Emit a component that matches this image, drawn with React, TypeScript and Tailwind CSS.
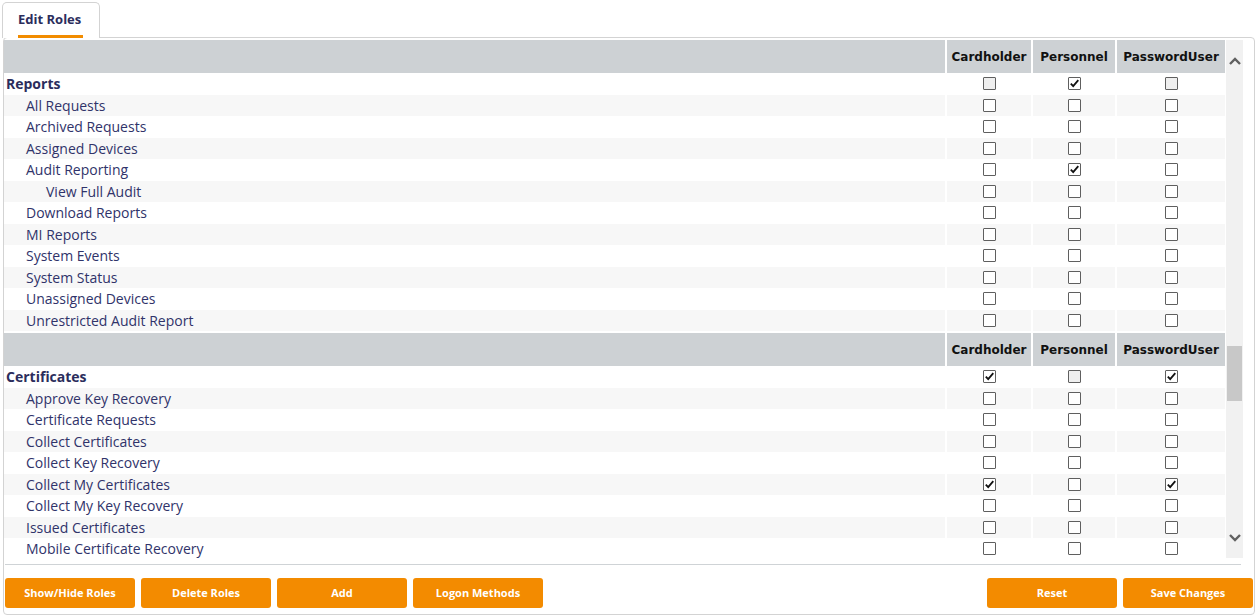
import React from 'react';

type Row = { label: string; level: 0 | 1 | 2; checks: [boolean, boolean, boolean] };

const reports: Row[] = [
  { label: 'Reports', level: 0, checks: [false, true, false] },
  { label: 'All Requests', level: 1, checks: [false, false, false] },
  { label: 'Archived Requests', level: 1, checks: [false, false, false] },
  { label: 'Assigned Devices', level: 1, checks: [false, false, false] },
  { label: 'Audit Reporting', level: 1, checks: [false, true, false] },
  { label: 'View Full Audit', level: 2, checks: [false, false, false] },
  { label: 'Download Reports', level: 1, checks: [false, false, false] },
  { label: 'MI Reports', level: 1, checks: [false, false, false] },
  { label: 'System Events', level: 1, checks: [false, false, false] },
  { label: 'System Status', level: 1, checks: [false, false, false] },
  { label: 'Unassigned Devices', level: 1, checks: [false, false, false] },
  { label: 'Unrestricted Audit Report', level: 1, checks: [false, false, false] },
];

const certificates: Row[] = [
  { label: 'Certificates', level: 0, checks: [true, false, true] },
  { label: 'Approve Key Recovery', level: 1, checks: [false, false, false] },
  { label: 'Certificate Requests', level: 1, checks: [false, false, false] },
  { label: 'Collect Certificates', level: 1, checks: [false, false, false] },
  { label: 'Collect Key Recovery', level: 1, checks: [false, false, false] },
  { label: 'Collect My Certificates', level: 1, checks: [true, false, true] },
  { label: 'Collect My Key Recovery', level: 1, checks: [false, false, false] },
  { label: 'Issued Certificates', level: 1, checks: [false, false, false] },
  { label: 'Mobile Certificate Recovery', level: 1, checks: [false, false, false] },
];

const roles = ['Cardholder', 'Personnel', 'PasswordUser'];

const Checkbox: React.FC<{ checked: boolean; section: boolean }> = ({ checked, section }) => (
  <div
    className={`w-[13px] h-[13px] border border-[#5f5f5f] rounded-[1px] flex items-center justify-center ${
      section && !checked ? 'bg-[#efefef]' : 'bg-white'
    }`}
  >
    {checked && (
      <svg width="11" height="11" viewBox="0 0 11 11">
        <path d="M1.8 5.6 L4.2 8.2 L9.3 2.2" fill="none" stroke="#111" strokeWidth="1.8" />
      </svg>
    )}
  </div>
);

const Section: React.FC<{ rows: Row[] }> = ({ rows }) => (
  <div className="grid grid-cols-[941px_84px_82px_108px] gap-x-[2px]">
    <div className="h-[33px] bg-[#cdd1d4]" />
    {roles.map((r) => (
      <div
        key={r}
        className="h-[33px] bg-[#cdd1d4] flex items-center justify-center text-[12px] font-bold text-[#111] font-['DejaVu_Sans',sans-serif]"
      >
        {r}
      </div>
    ))}
    {rows.map((row, i) => {
      const bg = i % 2 === 1 ? 'bg-[#f7f7f7]' : 'bg-white';
      const pad =
        row.level === 0
          ? 'pl-[2px] font-bold text-[#2b2d5c]'
          : row.level === 1
          ? 'pl-[22px] text-[#30336a]'
          : 'pl-[42px] text-[#30336a]';
      return (
        <React.Fragment key={row.label}>
          <div className={`h-[21.5px] flex items-center text-[14px] ${bg} ${pad}`}>{row.label}</div>
          {row.checks.map((c, j) => (
            <div key={j} className={`h-[21.5px] flex items-center justify-center ${bg}`}>
              <Checkbox checked={c} section={row.level === 0} />
            </div>
          ))}
        </React.Fragment>
      );
    })}
  </div>
);

const Button: React.FC<{ label: string }> = ({ label }) => (
  <button className="w-[130px] h-[30px] bg-[#f38b00] rounded-[3px] text-white text-[11px] font-bold">
    {label}
  </button>
);

export default function App() {
  return (
    <div className="w-[1258px] h-[616px] bg-white font-['Open_Sans',sans-serif] overflow-hidden">
      <div className="pl-[2px] pt-[2px] flex">
        <div className="relative z-10 -mb-px w-[98px] h-[36px] bg-white border border-b-0 border-[#d3d3d3] rounded-t-[5px] pl-[15px] pt-[7px]">
          <div className="text-[13px] font-bold text-[#2b2d5c] leading-[18px] w-fit">Edit Roles</div>
          <div className="mt-[7px] h-[3px] w-[65px] bg-[#f28c00]" />
        </div>
      </div>
      <div className="mx-[3px] h-[578px] border border-[#d3d3d3] rounded-[4px] flex flex-col">
        <div className="pt-[2px] flex h-[520px]">
          <div className="w-[1221px] h-[518px] overflow-hidden flex flex-col gap-[2px]">
            <Section rows={reports} />
            <Section rows={certificates} />
          </div>
          <div className="ml-px w-[17px] h-[518px] bg-[#f1f1f1] flex flex-col items-center">
            <svg className="mt-[17px]" width="12" height="8" viewBox="0 0 12 8">
              <path d="M1 7 L6 2 L11 7" fill="none" stroke="#606060" strokeWidth="2.4" />
            </svg>
            <div className="mt-[281px] w-[15px] h-[55px] bg-[#c8c8c8]" />
            <svg className="mt-[133px]" width="12" height="8" viewBox="0 0 12 8">
              <path d="M1 1 L6 6 L11 1" fill="none" stroke="#606060" strokeWidth="2.4" />
            </svg>
          </div>
        </div>
        <div className="mt-[6px] ml-px w-[1236px] h-px bg-[#cfd3d6]" />
        <div className="mt-[13px] pl-px pr-px flex justify-between">
          <div className="flex gap-[6px]">
            <Button label="Show/Hide Roles" />
            <Button label="Delete Roles" />
            <Button label="Add" />
            <Button label="Logon Methods" />
          </div>
          <div className="flex gap-[6px]">
            <Button label="Reset" />
            <Button label="Save Changes" />
          </div>
        </div>
      </div>
    </div>
  );
}
